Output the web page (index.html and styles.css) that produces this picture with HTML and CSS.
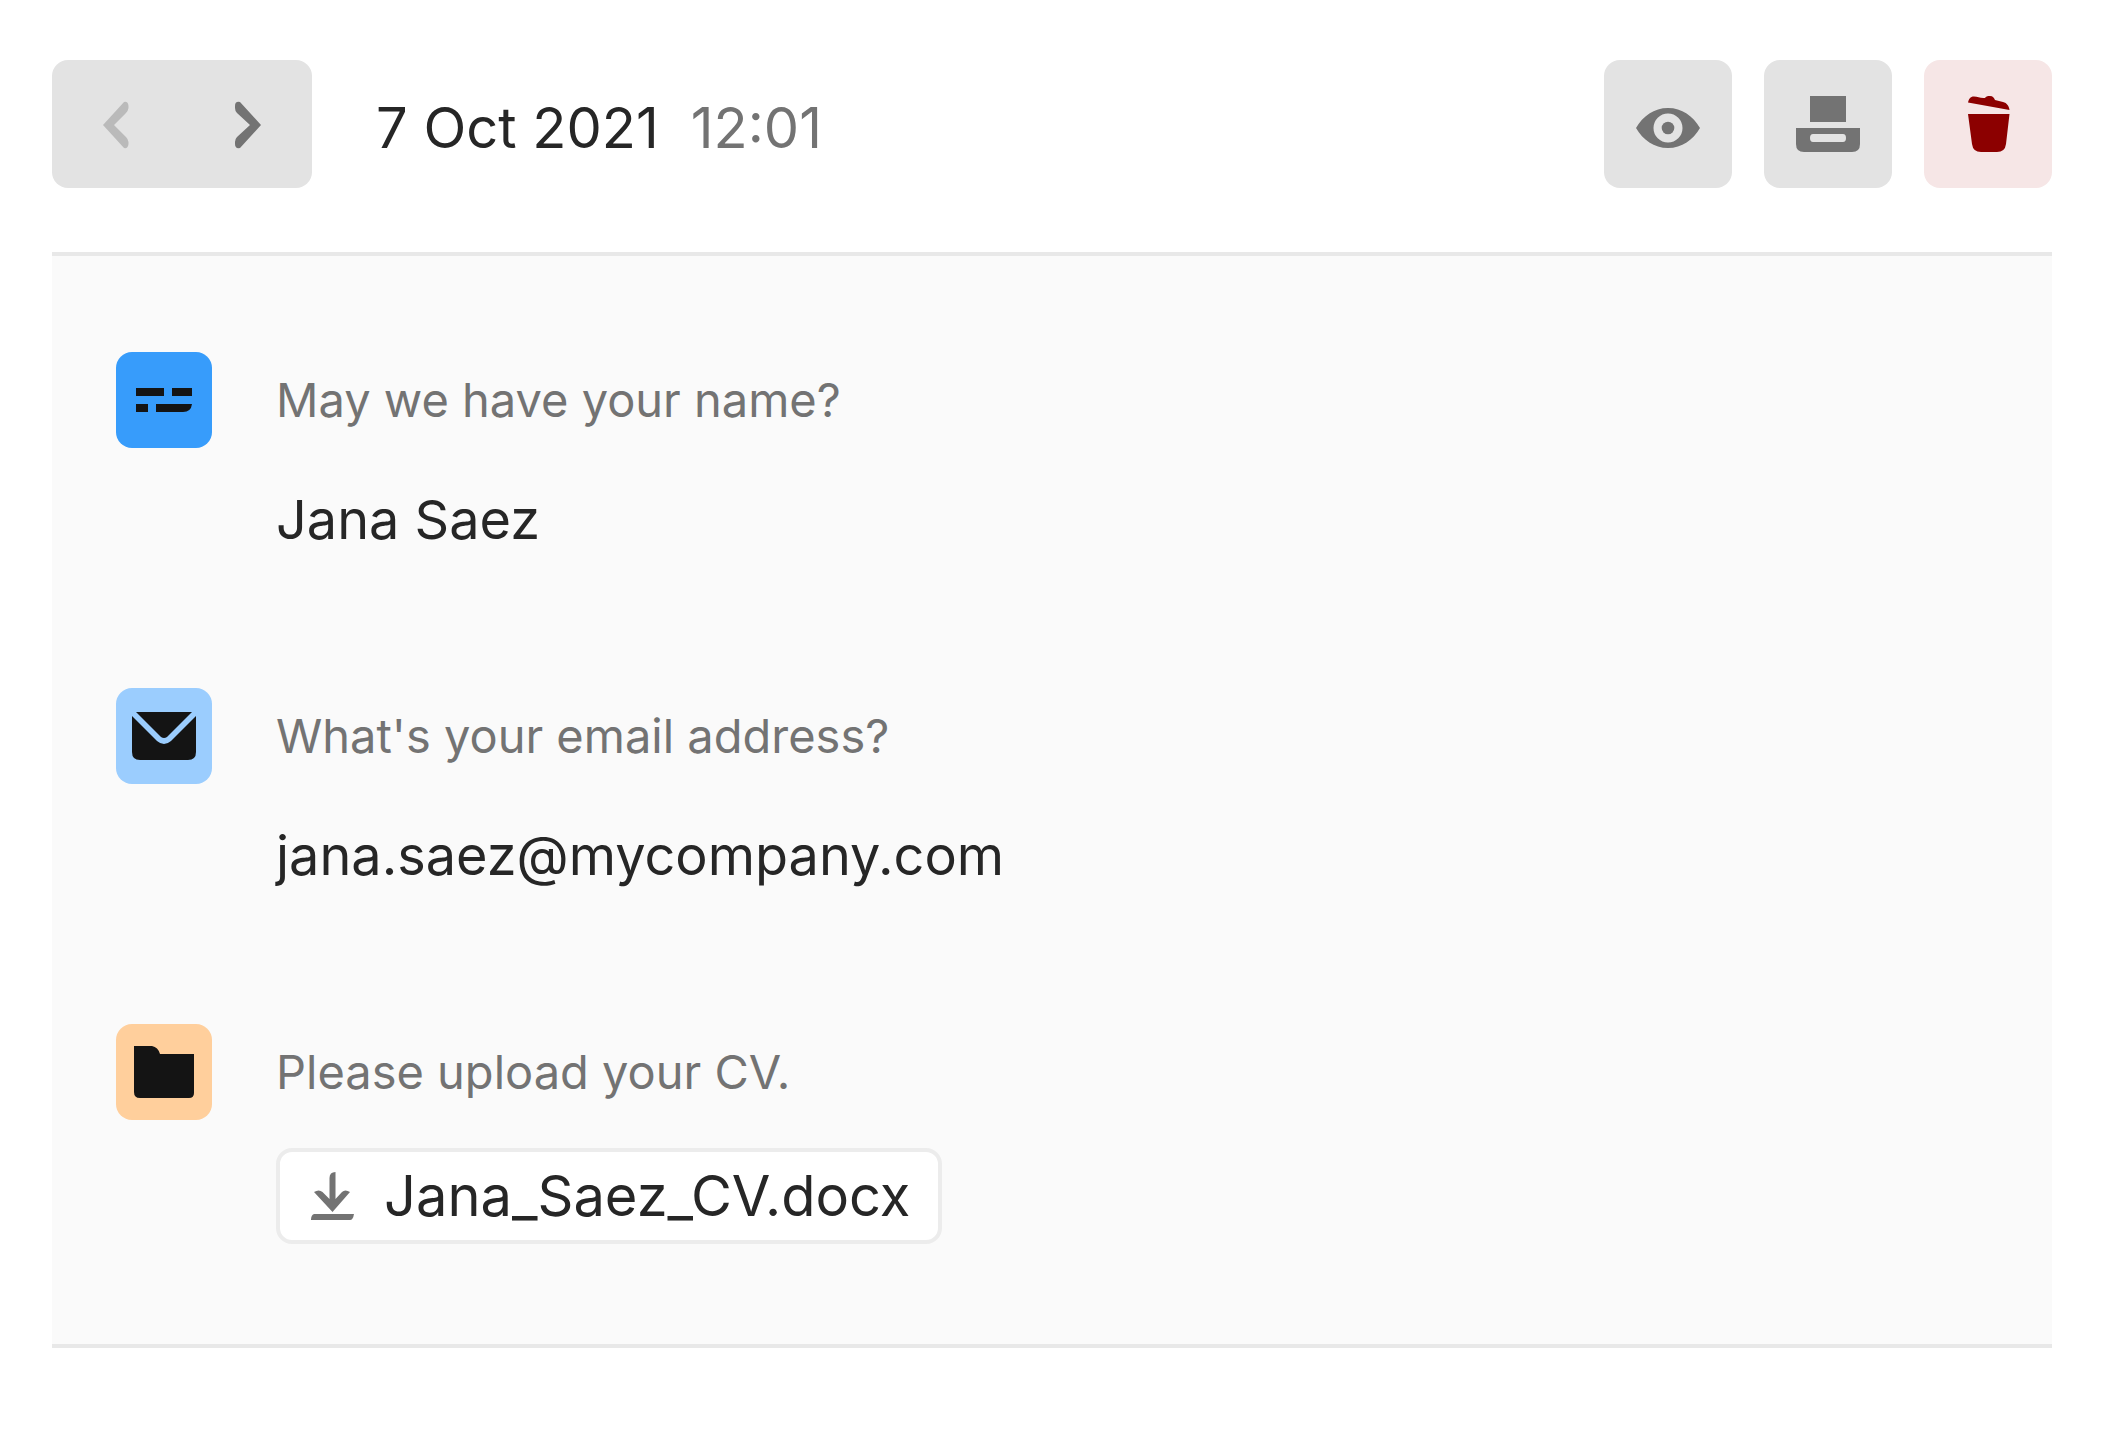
FILE: index.html
```html
<!DOCTYPE html>
<html lang="en">
<head>
    <meta charset="UTF-8">
    <meta name="viewport" content="width=device-width, initial-scale=1.0">
    <title>Response</title>
    <link rel="stylesheet" href="styles.css">
</head>
<body>
    <header class="toolbar">
        <div class="pager">
            <button type="button" class="pager-button" aria-label="Previous" disabled>
                <svg class="icon" viewBox="0 0 64 64"><path d="M39 10 Q43 9 43.500 14 V16 Q43 19 41 21 L29 33 L41 45 Q43 47 43.500 50 V52 Q43 57 39 56 L18 33 Z"/></svg>
            </button>
            <button type="button" class="pager-button" aria-label="Next">
                <svg class="icon" viewBox="0 0 64 64"><path d="M25 10 Q20 9 20 14 V16 Q20 19 22 21 L35 33 L22 45 Q20 47 20 50 V52 Q20 57 25 56 L46 33 Z"/></svg>
            </button>
        </div>
        <div class="timestamp">
            <span>7 Oct 2021</span>
            <span class="time">12:01</span>
        </div>
        <div class="actions">
            <button type="button" class="action" aria-label="View">
                <svg class="icon" viewBox="0 0 64 64"><path fill-rule="evenodd" d="M0 36 C7 24 18 16 32 16 S57 24 64 36 C57 48 46 56 32 56 S7 48 0 36 Z M32 21.5 a14.5 14.5 0 1 0 0 29 a14.5 14.5 0 1 0 0 -29 Z"/><circle cx="32" cy="36" r="6.3"/></svg>
            </button>
            <button type="button" class="action" aria-label="Print">
                <svg class="icon" viewBox="0 0 64 64"><path d="M14 4 H50 V30 H14 Z"/><path fill-rule="evenodd" d="M0 36 H64 V52 Q64 60 56 60 H8 Q0 60 0 52 Z M17 42 Q14 42 14 46 T17 50 H47 Q50 50 50 46 T47 42 Z"/></svg>
            </button>
            <button type="button" class="action action-delete" aria-label="Delete">
                <svg class="icon" viewBox="0 0 64 64"><path d="M12 10.500 C13 7 14 4.500 18 4.500 C22 4.500 24 6.500 29 6 C30 4.500 31 4 34 4 C37 4 38 6 39 8 L47 10 C51 11 53 14 53.500 18 Z"/><path d="M12 22 H53.500 L50 52 Q49 60 41 60 H25 Q17 60 16 52 Z"/></svg>
            </button>
        </div>
    </header>

    <main class="answers">
        <section class="entry">
            <div class="badge badge-text">
                <svg viewBox="0 0 96 96"><path d="M20 36 H48 V44 H20 Z M56 36 H76 V44 H56 Z M20 52 H32 V60 H20 Z M40 52 H76 Q75 60 67 60 H40 Z"/></svg>
            </div>
            <h2 class="question">May we have your name?</h2>
            <p class="answer">Jana Saez</p>
        </section>
        <section class="entry">
            <div class="badge badge-email">
                <svg viewBox="0 0 96 96"><path d="M20 24 H76 L51 49 Q48 51 45 49 Z"/><path d="M16 28 L41 53 Q48 59 55 53 L80 28 V64 Q80 72 72 72 H24 Q16 72 16 64 Z"/></svg>
            </div>
            <h2 class="question">What's your email address?</h2>
            <p class="answer">jana.saez@mycompany.com</p>
        </section>
        <section class="entry">
            <div class="badge badge-file">
                <svg viewBox="0 0 96 96"><path d="M18 22 H36 Q42 23 44 30 H78 V69 Q78 74 73 74 H24 Q18 74 18 68 Z"/></svg>
            </div>
            <h2 class="question">Please upload your CV.</h2>
            <p class="answer">
                <a class="file" href="#">
                    <svg class="file-icon" viewBox="0 0 48 48"><path d="M21.500 6 Q21.500 0 27.500 0 V27 L34 20 Q37 17 42 20 L24.500 40 L6 20 Q11 17 14.500 20 L21.500 27 Z"/><path d="M6 42 H46 Q45 48 42 48 H3 Q3 43 6 42 Z"/></svg>
                    Jana_Saez_CV.docx
                </a>
            </p>
        </section>
    </main>
</body>
</html>
```
FILE: styles.css
```css
* {
    box-sizing: border-box;
}

body {
    margin: 0;
    padding: 60px 60px 60px 52px;
    background-color: #ffffff;
    color: #262626;
    font-family: Inter, "Liberation Sans", sans-serif;
    font-size: 56px;
}

button {
    display: flex;
    align-items: center;
    justify-content: center;
    height: 128px;
    padding: 0;
    border: none;
    background-color: #e3e3e3;
    color: #737373;
    cursor: pointer;
}

svg {
    display: block;
    fill: currentColor;
}

.toolbar {
    display: flex;
    align-items: center;
    margin-bottom: 64px;
}

.pager {
    display: flex;
    border-radius: 16px;
    overflow: hidden;
}

.pager-button {
    width: 130px;
}

.pager-button:disabled {
    color: #bababa;
    cursor: default;
}

.icon {
    width: 64px;
    height: 64px;
}

.timestamp {
    display: flex;
    gap: 32px;
    margin-left: 64px;
    padding-top: 8px;
    line-height: 88px;
}

.time {
    color: #737373;
}

.actions {
    display: flex;
    gap: 32px;
    margin-left: auto;
}

.action {
    width: 128px;
    border-radius: 16px;
}

.action-delete {
    background-color: #f6e6e6;
    color: #8c0000;
}

.answers {
    display: flex;
    flex-direction: column;
    gap: 124px;
    padding: 96px 64px 100px;
    border-top: 4px solid #e8e8e8;
    border-bottom: 4px solid #e8e8e8;
    background-color: #fafafa;
}

.entry {
    display: grid;
    grid-template-columns: 96px 1fr;
    column-gap: 64px;
    row-gap: 28px;
}

.badge {
    height: 96px;
    border-radius: 16px;
    color: #141414;
}

.badge-text {
    background-color: #379cfb;
}

.badge-email {
    background-color: #9bcdfe;
}

.badge-file {
    background-color: #ffcf9c;
}

.question {
    margin: 0;
    color: #737373;
    font-size: 47px;
    font-weight: 400;
    line-height: 96px;
}

.answer {
    grid-column: 2;
    margin: 0;
    font-size: 54px;
    line-height: 88px;
}

.file {
    display: flex;
    align-items: center;
    gap: 28px;
    width: fit-content;
    padding: 0 28px;
    border: 4px solid #ececec;
    border-radius: 16px;
    background-color: #ffffff;
    color: #262626;
    font-size: 56px;
    text-decoration: none;
}

.file-icon {
    width: 48px;
    height: 48px;
    color: #737373;
}
```
